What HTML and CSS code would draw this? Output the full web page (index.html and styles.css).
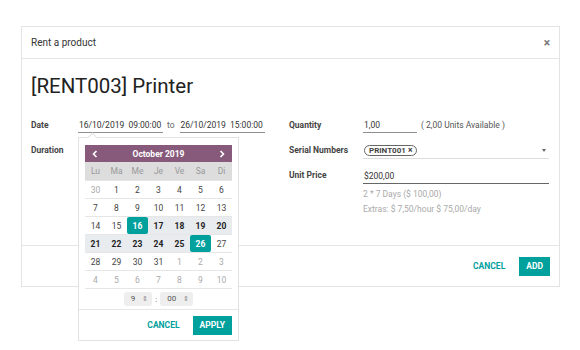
FILE: index.html
```html
<!DOCTYPE html>
<html>
<head>
  <title>Rent a product</title>
  <link rel="stylesheet" href="styles.css">
</head>
<body>
  <div class="modal">
    <div class="modal-header">
      <span class="modal-title">Rent a product</span>
      <span class="close">&times;</span>
    </div>
    <div class="modal-body">
      <h1>[RENT003] Printer</h1>
      <div class="form">
        <div class="group">
          <div class="row">
            <span class="label">Date</span>
            <div class="field">
              <span class="input date">16/10/2019&nbsp; 09:00:00</span>
              <span class="to">to</span>
              <span class="input date">26/10/2019&nbsp; 15:00:00</span>
            </div>
          </div>
          <div class="row">
            <span class="label">Duration</span>
          </div>
        </div>
        <div class="group group-right">
          <div class="row">
            <span class="label">Quantity</span>
            <div class="field">
              <span class="input qty">1,00</span>
              <span class="hint">( 2,00 Units Available )</span>
            </div>
          </div>
          <div class="row">
            <span class="label">Serial Numbers</span>
            <div class="field input wide">
              <span class="tag">PRINT001 <b>&times;</b></span>
              <span class="caret"></span>
            </div>
          </div>
          <div class="row">
            <span class="label">Unit Price</span>
            <div class="field input wide focused">$200,00</div>
          </div>
          <div class="notes">
            <div>2 * 7 Days ($ 100,00)</div>
            <div>Extras: $ 7,50/hour $ 75,00/day</div>
          </div>
        </div>
      </div>
    </div>
    <div class="modal-footer">
      <span class="btn-link">CANCEL</span>
      <span class="btn">ADD</span>
    </div>
  </div>

  <div class="picker">
    <div class="cal-head">
      <svg width="6" height="8" viewBox="0 0 6 8"><polyline points="4.5,1 1.5,4 4.5,7" fill="none" stroke="#fff" stroke-width="1.6"/></svg>
      <span>October 2019</span>
      <svg width="6" height="8" viewBox="0 0 6 8"><polyline points="1.5,1 4.5,4 1.5,7" fill="none" stroke="#fff" stroke-width="1.6"/></svg>
    </div>
    <div class="week days-head">
      <span>Lu</span><span>Ma</span><span>Me</span><span>Je</span><span>Ve</span><span>Sa</span><span>Di</span>
    </div>
    <div class="week">
      <span class="off">30</span><span>1</span><span>2</span><span>3</span><span>4</span><span>5</span><span>6</span>
    </div>
    <div class="week">
      <span>7</span><span>8</span><span>9</span><span>10</span><span>11</span><span>12</span><span>13</span>
    </div>
    <div class="week">
      <span>14</span><span>15</span><span class="sel">16</span><span class="range">17</span><span class="range">18</span><span class="range">19</span><span class="range">20</span>
    </div>
    <div class="week">
      <span class="range">21</span><span class="range">22</span><span class="range">23</span><span class="range">24</span><span class="range">25</span><span class="sel">26</span><span>27</span>
    </div>
    <div class="week">
      <span>28</span><span>29</span><span>30</span><span>31</span><span class="off">1</span><span class="off">2</span><span class="off">3</span>
    </div>
    <div class="week">
      <span class="off">4</span><span class="off">5</span><span class="off">6</span><span class="off">7</span><span class="off">8</span><span class="off">9</span><span class="off">10</span>
    </div>
    <div class="time">
      <span class="select">9 <i>&#8661;</i></span>
      <span class="colon">:</span>
      <span class="select">00 <i>&#8661;</i></span>
    </div>
    <div class="picker-footer">
      <span class="btn-link">CANCEL</span>
      <span class="btn">APPLY</span>
    </div>
  </div>
</body>
</html>
```

FILE: styles.css
```css
body {
  margin: 0;
  font-family: Roboto, "Liberation Sans", sans-serif;
  color: #4c4c4c;
  background: #fff;
}
.modal {
  margin: 26px 0 0 21px;
  width: 539px;
  height: 261px;
  border: 1px solid #e3e3e3;
  box-sizing: border-box;
  display: flex;
  flex-direction: column;
}
.modal-header {
  height: 31px;
  border-bottom: 1px solid #e6e6e6;
  display: flex;
  align-items: center;
  justify-content: space-between;
  padding: 0 9px 0 9px;
  font-size: 10px;
  color: #333;
}
.close {
  font-size: 12px;
  font-weight: bold;
  color: #777;
}
.modal-body {
  flex: 1;
  padding: 0 10px 0 9px;
}
h1 {
  margin: 15px 0 0;
  font-size: 20.5px;
  font-weight: 400;
  color: #222;
  line-height: 24px;
}
.form {
  display: flex;
  margin-top: 20px;
}
.group {
  width: 258px;
}
.group-right {
  flex: 1;
}
.row {
  display: flex;
  align-items: flex-start;
  height: 24.5px;
}
.row + .row + .row {
  margin-top: 1px;
}
.label {
  width: 47px;
  font-size: 8.5px;
  font-weight: bold;
  color: #444;
  padding-top: 2px;
}
.group-right .label {
  width: 74px;
}
.field {
  display: flex;
  align-items: flex-start;
  font-size: 8.5px;
  color: #333;
}
.input {
  border-bottom: 1px solid #8f8f8f;
  padding: 2px 0 2px 1px;
  line-height: 10px;
}
.date {
  width: 84px;
}
.to {
  color: #666;
  padding: 2px 5px 0 4px;
}
.qty {
  width: 53px;
}
.hint {
  padding: 2px 0 0 4px;
  color: #555;
}
.wide {
  flex: 1;
  justify-content: space-between;
  align-items: center;
  border-bottom-color: #ddd;
  height: 11px;
}
.focused {
  border-bottom-color: #666;
}
.tag {
  border: 1px solid #666;
  border-radius: 8px;
  padding: 0 4px;
  font-size: 8px;
  font-weight: bold;
  line-height: 9px;
  color: #444;
}
.tag b {
  font-size: 8.5px;
}
.caret {
  width: 0;
  height: 0;
  border-left: 2.5px solid transparent;
  border-right: 2.5px solid transparent;
  border-top: 3px solid #666;
  margin-right: 3px;
}
.notes {
  margin: -6px 0 0 74px;
  font-size: 8.5px;
  color: #aaa;
  line-height: 15px;
}
.modal-footer {
  height: 40px;
  border-top: 1px solid #e6e6e6;
  display: flex;
  align-items: center;
  justify-content: flex-end;
  padding: 0 9px 0 0;
  gap: 14px;
}
.btn-link {
  font-size: 8.5px;
  font-weight: bold;
  color: #00a09d;
}
.btn {
  background: #00a09d;
  color: #fff;
  font-size: 8.5px;
  font-weight: bold;
  padding: 5px 7px;
  line-height: 9px;
}
.picker {
  position: absolute;
  left: 78px;
  top: 137px;
  width: 161px;
  height: 204px;
  box-sizing: border-box;
  background: #fff;
  border: 1px solid #e2e2e2;
  padding: 7px 6px 0 6px;
}
.picker::before {
  content: "";
  position: absolute;
  top: -4px;
  left: 10px;
  width: 6px;
  height: 6px;
  background: #fff;
  border-left: 1px solid #e2e2e2;
  border-top: 1px solid #e2e2e2;
  transform: rotate(45deg);
}
.cal-head {
  height: 17px;
  background: #875a7b;
  color: #fff;
  font-size: 8.5px;
  font-weight: bold;
  display: flex;
  align-items: center;
  justify-content: space-between;
  padding: 0 7px;
}
.week {
  display: grid;
  grid-template-columns: repeat(7, 1fr);
  height: 18px;
  border-top: 1px solid #e6e6e6;
  box-sizing: border-box;
  font-size: 8.5px;
  color: #444;
}
.week span {
  display: flex;
  align-items: center;
  justify-content: center;
}
.days-head {
  border-top: none;
  background: #ddd;
  color: #999;
}
.week .off {
  color: #aaa;
}
.week .range {
  background: #e9ecef;
  color: #222;
  font-weight: bold;
}
.week .sel {
  background: #00a09d;
  color: #fff;
  font-weight: bold;
  border-radius: 2px;
}
.time {
  height: 20px;
  border-top: 1px solid #e6e6e6;
  display: flex;
  align-items: center;
  justify-content: center;
  gap: 3px;
  font-size: 8px;
  color: #555;
}
.select {
  background: #eee;
  border-radius: 3px;
  padding: 2px 4px 2px 7px;
  line-height: 9px;
}
.select i {
  font-style: normal;
  font-size: 7px;
  margin-left: 5px;
  color: #888;
}
.picker-footer {
  margin: 0 -6px;
  border-top: 1px solid #e6e6e6;
  height: 30px;
  display: flex;
  align-items: center;
  justify-content: flex-end;
  padding-right: 6px;
  gap: 13px;
}
```
